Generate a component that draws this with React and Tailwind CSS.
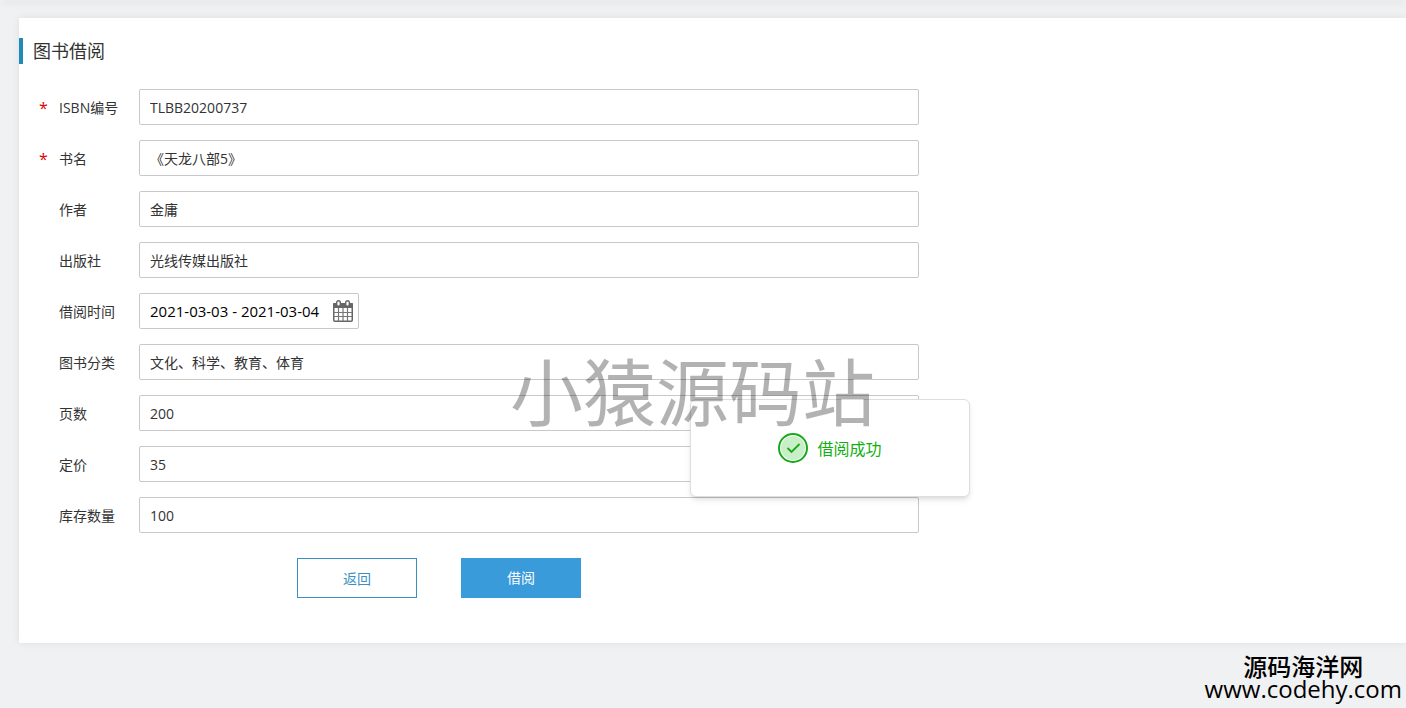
import React from 'react';

const fields = [
  { id: 'isbn', label: 'ISBN编号', value: 'TLBB20200737', required: true },
  { id: 'name', label: '书名', value: '《天龙八部5》', required: true },
  { id: 'author', label: '作者', value: '金庸' },
  { id: 'press', label: '出版社', value: '光线传媒出版社' },
  { id: 'period', label: '借阅时间', value: '2021-03-03 - 2021-03-04', date: true },
  { id: 'category', label: '图书分类', value: '文化、科学、教育、体育' },
  { id: 'pages', label: '页数', value: '200' },
  { id: 'price', label: '定价', value: '35' },
  { id: 'stock', label: '库存数量', value: '100' },
];

const CalendarIcon = () => (
  <svg viewBox="0 0 20 22" className="w-5 h-[22px]" aria-hidden="true">
    <rect x="0.75" y="3.75" width="18.5" height="17.5" rx="1" fill="#fff" stroke="#666" strokeWidth="1.5" />
    <path d="M0 4a1 1 0 0 1 1-1h18a1 1 0 0 1 1 1v4H0z" fill="#666" />
    <path d="M5.5 8v13M10 8v13M14.5 8v13M1 12.5h18M1 16.5h18" stroke="#777" strokeWidth="1.2" fill="none" />
    <rect x="3.7" y="0.7" width="3.6" height="5.6" rx="1.8" fill="#fff" stroke="#666" strokeWidth="1.4" />
    <rect x="12.7" y="0.7" width="3.6" height="5.6" rx="1.8" fill="#fff" stroke="#666" strokeWidth="1.4" />
  </svg>
);

const Field = ({ id, label, value, required, date }) => (
  <div className="flex items-center">
    <span className="w-10 pl-5 pt-0.5 text-base leading-5 text-[#e00000]">{required ? '*' : ''}</span>
    <label htmlFor={id} className="w-20 shrink-0 pt-0.5 text-sm">{label}</label>
    {date ? (
      <div className="flex items-center w-[220px] h-9 pr-[5px] border border-[#c8c8c8] rounded-xs">
        <input id={id} defaultValue={value} className="flex-1 min-w-0 pl-2.5 text-[15px] text-black outline-none" />
        <button type="button" aria-label="选择日期"><CalendarIcon /></button>
      </div>
    ) : (
      <input
        id={id}
        defaultValue={value}
        className="flex-1 min-w-0 max-w-[780px] h-9 px-2.5 text-sm border border-[#c8c8c8] rounded-xs outline-none"
      />
    )}
  </div>
);

const Toast = () => (
  <div
    role="status"
    className="absolute left-[59%] top-[448px] -translate-x-1/2 -translate-y-1/2 flex items-center justify-center gap-2.5 w-[280px] h-[98px] bg-white border border-[#dedede] rounded-md shadow-md text-base text-[#0fb00f]"
  >
    <svg viewBox="0 0 30 30" className="w-[30px] h-[30px]" fill="none" aria-hidden="true">
      <circle cx="15" cy="15" r="14" fill="#fff" stroke="#17a917" strokeWidth="2" />
      <circle cx="15" cy="15" r="12" fill="#c9efc9" />
      <path d="M9.5 15l4 4 8-8" stroke="#17a917" strokeWidth="1.8" />
    </svg>
    <span className="pt-0.5">借阅成功</span>
  </div>
);

export default function App() {
  return (
    <div className="relative min-h-screen overflow-hidden bg-[#f0f1f3] pt-[18px] pl-[19px] text-[#333] font-['Open_Sans','Noto_Sans_CJK_SC',sans-serif]">
      <div className="absolute inset-x-0 -top-1 h-1 shadow-md" />

      <main className="bg-white pt-5 pb-[45px] shadow-[0_0_8px_rgba(0,0,0,0.08)]">
        <h1 className="border-l-4 border-[#2189b5] pl-2.5 text-lg leading-[26px]">图书借阅</h1>
        <form className="mt-[25px]" onSubmit={(e) => e.preventDefault()}>
          <div className="flex flex-col gap-[15px]">
            {fields.map((field) => (
              <Field key={field.id} {...field} />
            ))}
          </div>
          <div className="flex gap-11 mt-[25px] pl-[278px] text-sm">
            <button type="button" className="w-[120px] h-10 pt-0.5 border border-[#3a8fc4] text-[#3a8fc4]">返回</button>
            <button type="submit" className="w-[120px] h-10 bg-[#399bd9] text-white">借阅</button>
          </div>
        </form>
      </main>

      <Toast />

      <p className="absolute left-[510px] top-[356px] text-[73px] leading-[72px] text-black/30 whitespace-nowrap pointer-events-none">小猿源码站</p>
      <p className="absolute right-1 bottom-2 text-2xl leading-[22px] font-medium text-center text-black">
        源码海洋网<br />www.codehy.com
      </p>
    </div>
  );
}
